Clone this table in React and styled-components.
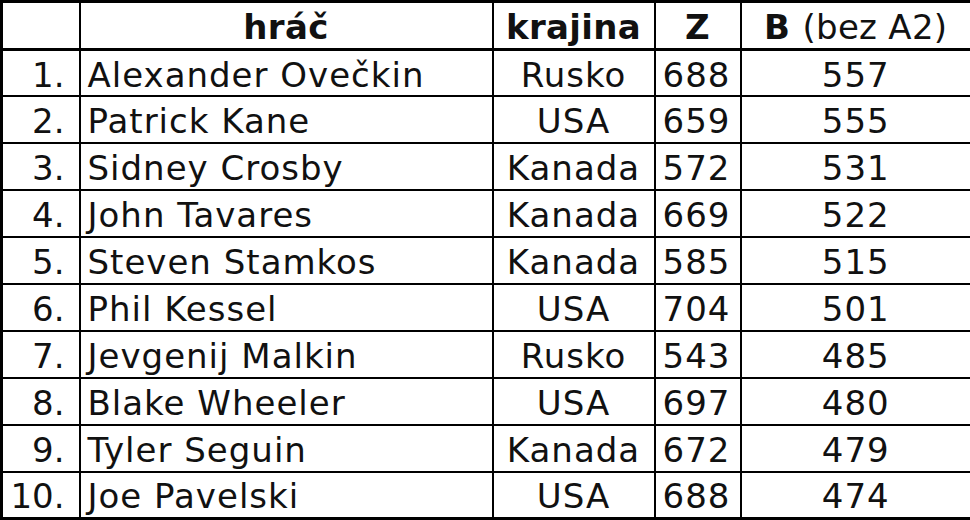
import React from 'react';
import styled, { createGlobalStyle } from 'styled-components';

const GlobalStyle = createGlobalStyle`
  html, body {
    margin: 0;
    padding: 0;
    background: #ffffff;
  }
`;

const Table = styled.table`
  width: 970px;
  height: 520px;
  border-collapse: collapse;
  table-layout: fixed;
  border: 3px solid #000;
  font-family: "DejaVu Sans", Verdana, sans-serif;
  font-size: 34px;
  letter-spacing: 1px;
  color: #111;
  background: #fff;
`;

const Col = styled.col`
  width: ${(p) => p.$w}px;
`;

const HeadRow = styled.tr`
  height: 48px;
`;

const Row = styled.tr`
  height: 46px;
`;

const Head = styled.th`
  border: 2px solid #000;
  border-bottom-width: 3px;
  font-weight: bold;
  letter-spacing: 0.3px;
  text-align: center;
  padding: 2px 0 0;
  white-space: nowrap;
  line-height: 1;
`;

const Light = styled.span`
  font-weight: normal;
`;

// num column is right aligned, names and Z left, the rest centred
const Cell = styled.td`
  border: 2px solid #000;
  padding: ${(p) =>
    p.$align === 'right' ? '3px 14px 0 0' : p.$align === 'left' ? '3px 0 0 7px' : '3px 0 0'};
  text-align: ${(p) => p.$align || 'center'};
  letter-spacing: ${(p) => (p.$align === 'right' ? '0' : 'inherit')};
  white-space: nowrap;
  overflow: hidden;
  line-height: 1;
`;

const players = [
  ['Alexander Ovečkin', 'Rusko', 688, 557],
  ['Patrick Kane', 'USA', 659, 555],
  ['Sidney Crosby', 'Kanada', 572, 531],
  ['John Tavares', 'Kanada', 669, 522],
  ['Steven Stamkos', 'Kanada', 585, 515],
  ['Phil Kessel', 'USA', 704, 501],
  ['Jevgenij Malkin', 'Rusko', 543, 485],
  ['Blake Wheeler', 'USA', 697, 480],
  ['Tyler Seguin', 'Kanada', 672, 479],
  ['Joe Pavelski', 'USA', 688, 474],
];

export default function App() {
  return (
    <>
      <GlobalStyle />
      <Table>
        <colgroup>
          <Col $w={78} />
          <Col $w={413} />
          <Col $w={162} />
          <Col $w={86} />
          <Col $w={231} />
        </colgroup>
        <thead>
          <HeadRow>
            <Head />
            <Head>hráč</Head>
            <Head>krajina</Head>
            <Head>Z</Head>
            <Head>
              B <Light>(bez A2)</Light>
            </Head>
          </HeadRow>
        </thead>
        <tbody>
          {players.map(([name, country, z, b], i) => (
            <Row key={name}>
              <Cell $align="right">{i + 1}.</Cell>
              <Cell $align="left">{name}</Cell>
              <Cell>{country}</Cell>
              <Cell $align="left">{z}</Cell>
              <Cell>{b}</Cell>
            </Row>
          ))}
        </tbody>
      </Table>
    </>
  );
}
